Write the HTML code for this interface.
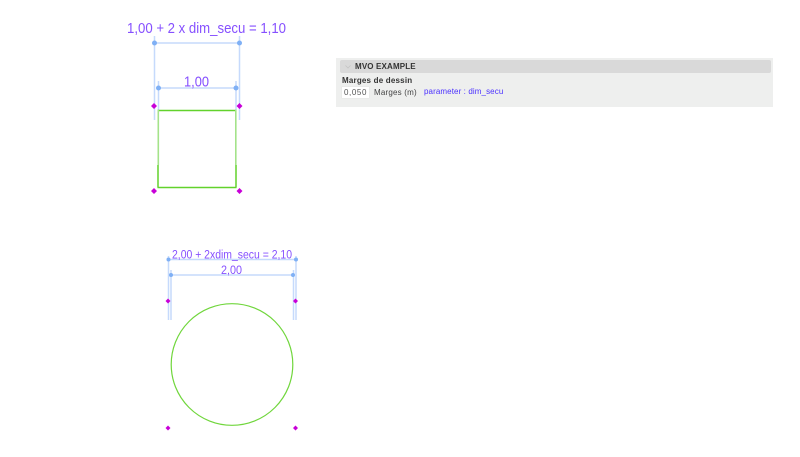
<!DOCTYPE html>
<html>
<head>
<meta charset="utf-8">
<style>
html,body{margin:0;padding:0;width:800px;height:457px;background:#fff;overflow:hidden;font-family:"Liberation Sans",sans-serif}
svg{position:absolute;left:0;top:0}
.panel{position:absolute;left:336px;top:58px;width:437px;height:49px;background:#eeefee;filter:blur(.3px)}
.head{position:absolute;left:4px;top:2px;width:431px;height:13px;background:#d9d9d9;border-radius:2px;font-size:8px;font-weight:bold;color:#333;line-height:13px;letter-spacing:.15px}
.head span{position:absolute;left:15px}
.head svg{position:absolute;left:5px;top:5px}
.lab{position:absolute;left:6px;top:18px;font-size:8px;font-weight:bold;color:#333;letter-spacing:.2px;line-height:10px}
.inp{position:absolute;left:6px;top:29px;width:27px;height:11px;background:#fff;box-shadow:0 0 0 .5px #e4e4e4;font-size:8px;color:#555;line-height:11.500px;text-align:center;letter-spacing:.6px}
.m{position:absolute;left:38px;top:29px;font-size:8px;color:#444;line-height:11px;letter-spacing:.2px}
.p{position:absolute;left:88px;top:28px;font-size:8px;color:#4a30ff;line-height:11px;letter-spacing:.1px}
</style>
</head>
<body>
<svg width="800" height="457" viewBox="0 0 800 457" font-family="Liberation Sans, sans-serif" style="filter:blur(.25px)">
<g stroke="#c6dafc" stroke-width="1.500" fill="none">
<path d="M154.500 36V120M239.500 36V120M154 43H240"/>
<path d="M158.500 81V110M236 81V110M158 88H236"/>
<path d="M168.500 256V320M296 256V320M168 259.500H296"/>
<path d="M171 270V320M293.500 270V320M171 275H293"/>
</g>
<g fill="#7fb0f5">
<circle cx="154.500" cy="43" r="2.500"/><circle cx="239.500" cy="43" r="2.500"/>
<circle cx="158.500" cy="88" r="2.500"/><circle cx="236" cy="88" r="2.500"/>
<circle cx="168.500" cy="259.500" r="2"/><circle cx="296" cy="259.500" r="2"/>
<circle cx="171" cy="275" r="2"/><circle cx="293" cy="275" r="2"/>
</g>
<g fill="#8650ff" text-anchor="middle">
<text x="206.500" y="33" font-size="14.500" textLength="159" lengthAdjust="spacingAndGlyphs">1,00 + 2 x dim_secu = 1,10</text>
<text x="196.500" y="86.500" font-size="15" textLength="25" lengthAdjust="spacingAndGlyphs">1,00</text>
<text x="232" y="258.500" font-size="11.500" textLength="120" lengthAdjust="spacingAndGlyphs">2,00 + 2xdim_secu = 2,10</text>
<text x="231.500" y="274" font-size="11.500" textLength="21" lengthAdjust="spacingAndGlyphs">2,00</text>
</g>
<path d="M157.500 110.500H236.500M157.500 187.500H236.500M158 165V187.500M236 165V187.500" stroke="#62d22c" stroke-width="1.500" fill="none"/>
<path d="M158.300 110V165M235.800 110V165" stroke="#a4e38a" stroke-width="1.600" fill="none"/>
<circle cx="232" cy="364.500" r="60.800" fill="none" stroke="#70d63c" stroke-width="1.200"/>
<g fill="#c800d8">
<path d="M154 103l3 3-3 3-3-3zM239.500 103l3 3-3 3-3-3zM154 188l3 3-3 3-3-3zM239.500 188l3 3-3 3-3-3z"/>
<path d="M168 298.500l2.500 2.500-2.500 2.500-2.500-2.500zM295.500 298.500l2.500 2.500-2.500 2.500-2.500-2.500zM168 425.500l2.500 2.500-2.500 2.500-2.500-2.500zM295.500 425.500l2.500 2.500-2.500 2.500-2.500-2.500z"/>
</g>
</svg>
<div class="panel">
<div class="head"><svg width="6" height="4" viewBox="0 0 6 4"><path d="M.5 .5L3 3L5.500 .5" fill="none" stroke="#c4c4c4" stroke-width=".8"/></svg><span>MVO EXAMPLE</span></div>
<div class="lab">Marges de dessin</div>
<div class="inp">0,050</div>
<div class="m">Marges (m)</div>
<div class="p">parameter : dim_secu</div>
</div>
</body>
</html>
